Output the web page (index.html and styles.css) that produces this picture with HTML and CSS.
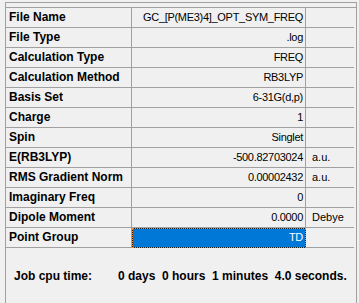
FILE: index.html
```html
<!DOCTYPE html>
<html lang="en">
<head>
    <meta charset="UTF-8">
    <title>Summary</title>
    <link rel="stylesheet" href="styles.css">
</head>
<body>
    <div class="panel">
        <!-- column header strip (scrolled out of view) -->
        <div class="grid-head"></div>

        <div class="grid">
            <div class="cell name">File Name</div>
            <div class="cell value">GC_[P(ME3)4]_OPT_SYM_FREQ</div>
            <div class="cell unit"></div>

            <div class="cell name">File Type</div>
            <div class="cell value">.log</div>
            <div class="cell unit"></div>

            <div class="cell name">Calculation Type</div>
            <div class="cell value">FREQ</div>
            <div class="cell unit"></div>

            <div class="cell name">Calculation Method</div>
            <div class="cell value">RB3LYP</div>
            <div class="cell unit"></div>

            <div class="cell name">Basis Set</div>
            <div class="cell value">6-31G(d,p)</div>
            <div class="cell unit"></div>

            <div class="cell name">Charge</div>
            <div class="cell value">1</div>
            <div class="cell unit"></div>

            <div class="cell name">Spin</div>
            <div class="cell value">Singlet</div>
            <div class="cell unit"></div>

            <div class="cell name">E(RB3LYP)</div>
            <div class="cell value">-500.82703024</div>
            <div class="cell unit">a.u.</div>

            <div class="cell name">RMS Gradient Norm</div>
            <div class="cell value">0.00002432</div>
            <div class="cell unit">a.u.</div>

            <div class="cell name">Imaginary Freq</div>
            <div class="cell value">0</div>
            <div class="cell unit"></div>

            <div class="cell name">Dipole Moment</div>
            <div class="cell value">0.0000</div>
            <div class="cell unit">Debye</div>

            <div class="cell name">Point Group</div>
            <div class="cell value selected">TD</div>
            <div class="cell unit"></div>
        </div>

        <div class="cpu-time">
            <span class="cpu-label">Job cpu time:</span>
            <span class="cpu-value">0 days  0 hours  1 minutes  4.0 seconds.</span>
        </div>
    </div>
</body>
</html>
```

FILE: styles.css
```css
body {
    margin: 0;
    background-color: #f0f0f0;
    font-family: "Liberation Sans", Arial, sans-serif;
    font-size: 11px;
    color: #000;
}
.panel {
    margin: 2px 0 0 5px;
    width: 350px;
    height: 301px;
    border-top: 1px solid #a0a0a0;
    border-left: 1px solid #a0a0a0;
    border-right: 1px solid #a0a0a0;
}
.grid-head {
    height: 4px;
    border-bottom: 1px solid #a0a0a0;
}
.grid {
    display: grid;
    grid-template-columns: 126px 174px 48px;
    grid-auto-rows: 20px;
}
.cell {
    border-right: 1px solid #a0a0a0;
    border-bottom: 1px solid #a0a0a0;
    line-height: 19px;
    white-space: nowrap;
    overflow: hidden;
}
.cell.unit {
    border-right: none;
    padding-left: 6px;
}
.name {
    font-size: 12px;
    font-weight: bold;
    padding-left: 3px;
}
.value {
    text-align: right;
    padding-right: 2px;
    letter-spacing: -0.3px;
}
.value.selected {
    border: 1px dotted #ff8728;
    line-height: 17px;
    color: #fff;
    background: linear-gradient(#0078d7, #0078d7) padding-box, #1e1e1e;
}
.cpu-time {
    display: flex;
    font-size: 12px;
    font-weight: bold;
    margin-top: 21px;
    padding-left: 8px;
}
.cpu-label {
    width: 104px;
}
.cpu-value {
    white-space: pre;
}
```
